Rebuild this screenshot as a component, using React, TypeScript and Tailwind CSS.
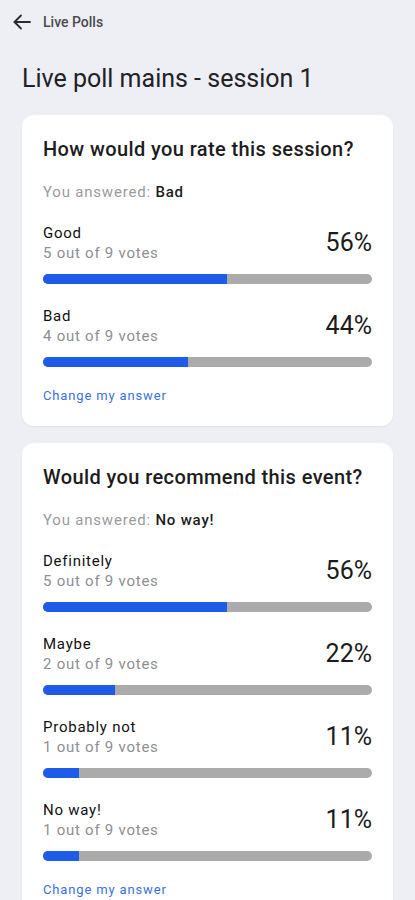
import React from 'react'

type Option = { label: string; votes: number; pct: number }
type Poll = { question: string; answer: string; total: number; options: Option[] }

const polls: Poll[] = [
  {
    question: 'How would you rate this session?',
    answer: 'Bad',
    total: 9,
    options: [
      { label: 'Good', votes: 5, pct: 56 },
      { label: 'Bad', votes: 4, pct: 44 },
    ],
  },
  {
    question: 'Would you recommend this event?',
    answer: 'No way!',
    total: 9,
    options: [
      { label: 'Definitely', votes: 5, pct: 56 },
      { label: 'Maybe', votes: 2, pct: 22 },
      { label: 'Probably not', votes: 1, pct: 11 },
      { label: 'No way!', votes: 1, pct: 11 },
    ],
  },
]

function PollCard({ poll }: { poll: Poll }) {
  return (
    <div className="bg-white rounded-[12px] shadow-[0_1px_2px_rgba(0,0,0,0.06)] px-[21px] pt-[20px] pb-[20px]">
      <div className="text-[20px] leading-[28px] font-medium tracking-[0.4px] text-[#1c1c1e]">{poll.question}</div>
      <div className="mt-[19px] text-[15px] leading-[20px] tracking-[0.8px] text-[#9a9a9e]">
        You answered: <span className="font-medium text-[#1c1c1e]">{poll.answer}</span>
      </div>
      <div className="flex flex-col gap-[22px] mt-[21px]">
        {poll.options.map((o) => (
          <div key={o.label}>
            <div className="flex items-center justify-between">
              <div className="tracking-[0.75px]">
                <div className="text-[15px] leading-[20px] text-[#111114]">{o.label}</div>
                <div className="text-[15px] leading-[20px] text-[#8e8e93]">
                  {o.votes} out of {poll.total} votes
                </div>
              </div>
              <div className="text-[25px] leading-[32px] text-[#1c1c1e]">{o.pct}%</div>
            </div>
            <div className="mt-[11px] h-[10px] w-full rounded-full bg-[#ababab] overflow-hidden">
              <div className="h-full bg-[#1f5be9]" style={{ width: `${o.pct}%` }} />
            </div>
          </div>
        ))}
      </div>
      <div className="mt-[19px] text-[13px] leading-[20px] tracking-[0.85px] text-[#3a6fe6]">Change my answer</div>
    </div>
  )
}

export default function App() {
  return (
    <div className="min-h-screen bg-[#eeeef5] font-['Roboto',sans-serif] pb-6">
      <div className="flex items-center pt-[12px] pl-[13px] h-[32px]">
        <svg width="18" height="16" viewBox="0 0 18 16" fill="none" stroke="#2a2a2e" strokeWidth="1.8" strokeLinecap="round" strokeLinejoin="round">
          <path d="M17 8H1.5" />
          <path d="M8 1.5L1.5 8L8 14.5" />
        </svg>
        <span className="ml-[12px] text-[14px] leading-[20px] font-medium text-[#4a4a4e]">Live Polls</span>
      </div>
      <div className="mt-[31px] px-[22px] text-[25px] leading-[32px] text-[#222226]">Live poll mains - session 1</div>
      <div className="mt-[20px] px-[22px] flex flex-col gap-[17px]">
        {polls.map((p) => (
          <PollCard key={p.question} poll={p} />
        ))}
      </div>
    </div>
  )
}
